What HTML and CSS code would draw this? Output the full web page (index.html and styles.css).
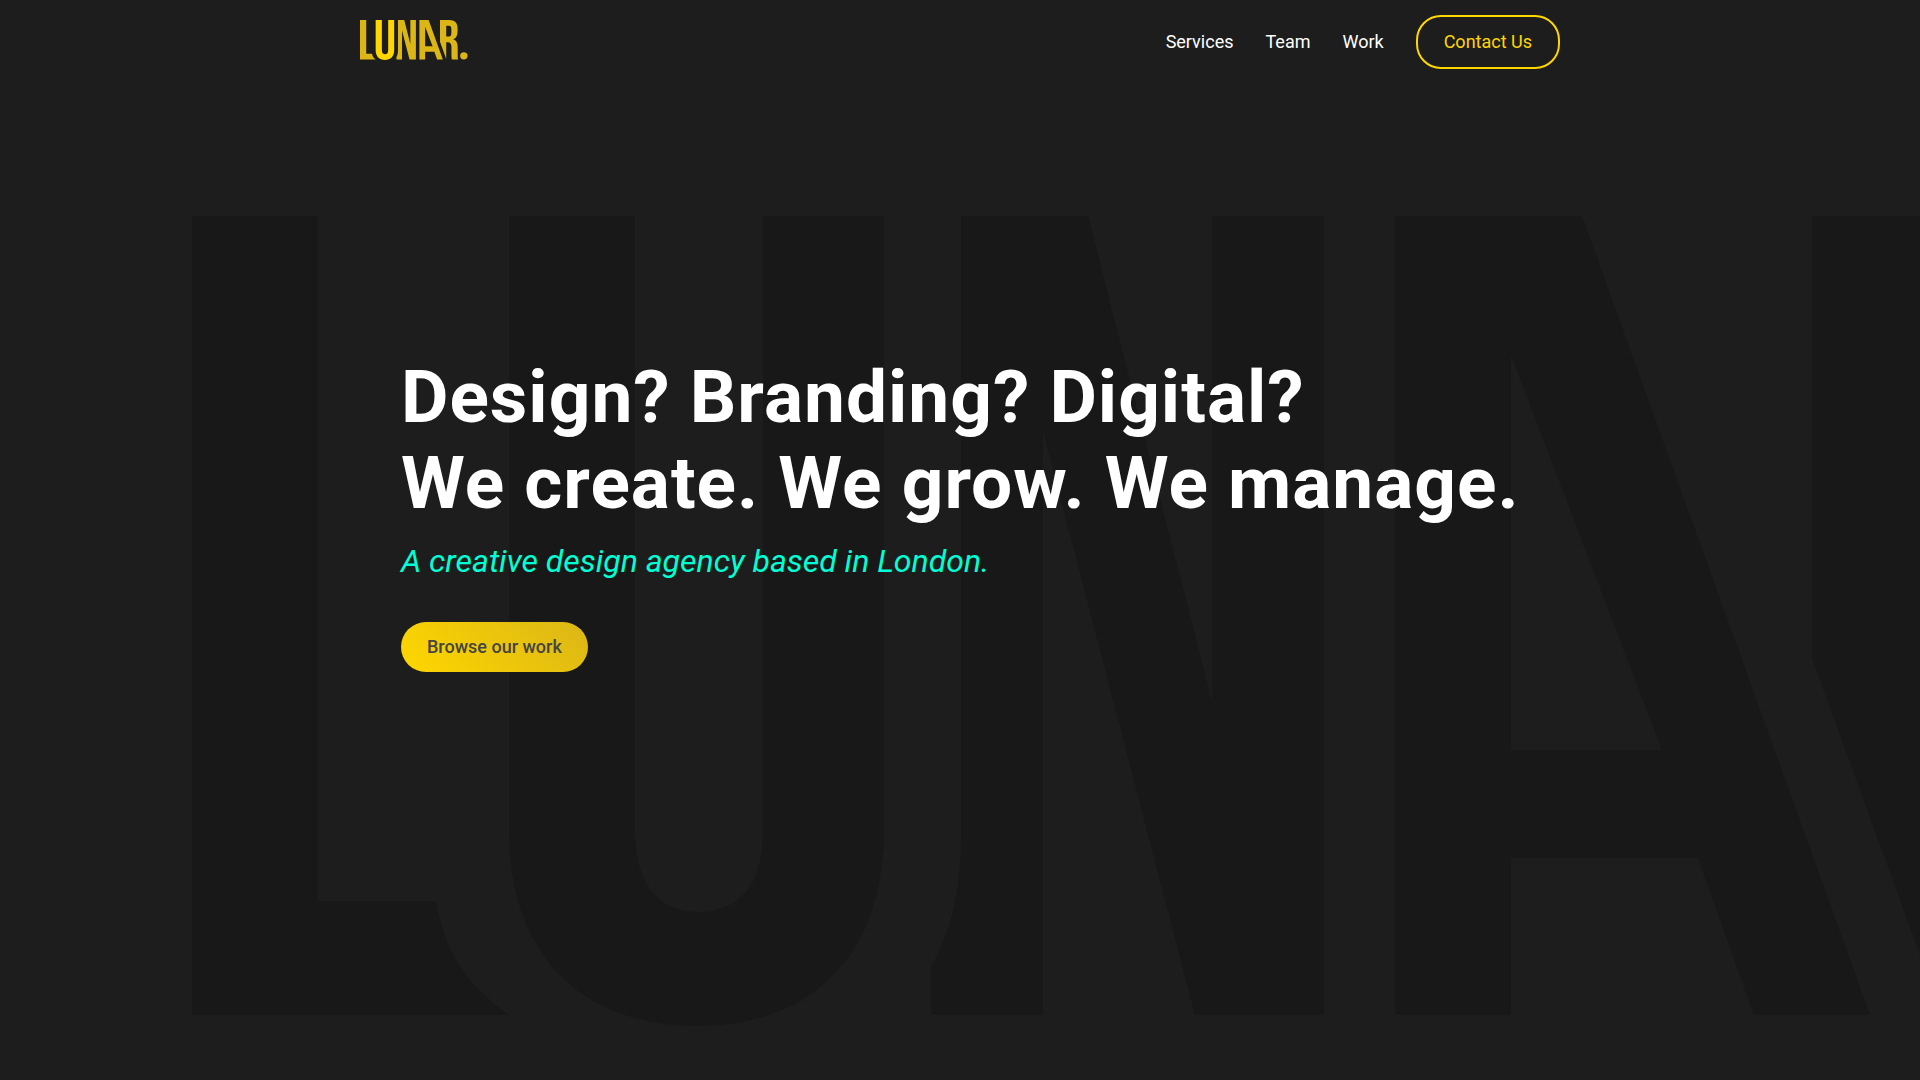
FILE: index.html
```html
<!DOCTYPE html>
<html lang="en">
<head>
<meta charset="utf-8">
<meta name="viewport" content="width=device-width, initial-scale=1">
<title>Lunar</title>
<link rel="stylesheet" href="styles.css">
</head>
<body>
<div class="page">
  <svg class="backdrop" viewBox="192 216 2178 810" aria-hidden="true">
    <defs>
      <g id="mark-base">
        <path d="M192 216H318V901H436C444 950 466 985 509 1015H192Z"/>
        <path d="M961 216H1088L1212 702V216H1324V1015H1195L1043 431V1015H931V967C952 930 961 888 961 835Z"/>
        <path fill-rule="evenodd" d="M1395 216H1582L1870 1015H1754L1698 858H1511V1015H1395ZM1511 355V750H1662Z"/>
        <path fill-rule="evenodd" d="M1812 216H1996C2112 216 2168 272 2168 384V444C2168 530 2140 584 2080 608C2144 628 2170 682 2170 770V926C2170 966 2170 990 2182 1015H2054C2046 990 2044 970 2044 926V768C2044 694 2022 666 1960 666H1938V1004L1812 658ZM1938 330V552H1984C2024 552 2042 530 2042 472V396C2042 350 2026 330 1992 330Z"/>
        <circle cx="2295" cy="942" r="75"/>
      </g>
      <path id="mark-accent" d="M509 216H635V830C635 884 658 912 699 912S763 884 763 830V216H884V830C884 955 812 1026 697 1026S509 955 509 830Z"/>
    </defs>
    <use href="#mark-base"/>
    <use href="#mark-accent"/>
  </svg>

  <header class="header">
    <a class="brand" href="#" aria-label="Lunar home">
      <svg class="logo" viewBox="192 216 2178 810" aria-hidden="true">
        <use class="logo-base" href="#mark-base"/>
        <use class="logo-accent" href="#mark-accent"/>
      </svg>
    </a>
    <nav class="nav" aria-label="Main">
      <a class="nav-link" href="#services">Services</a>
      <a class="nav-link" href="#team">Team</a>
      <a class="nav-link" href="#work">Work</a>
      <a class="button button-outline" href="#contact">Contact Us</a>
    </nav>
  </header>

  <main class="hero">
    <h1 class="title">Design? Branding? Digital?<br>We create. We grow. We manage.</h1>
    <p class="tagline">A creative design agency based in London.</p>
    <button class="button button-solid" type="button">Browse our work</button>
  </main>
</div>
</body>
</html>
```
FILE: styles.css
```css
* {
  box-sizing: border-box;
}

body {
  margin: 0;
  background: #1d1d1d;
  color: #fff;
  font-family: Roboto, "Liberation Sans", sans-serif;
  font-size: 18px;
  line-height: 22px;
}

.page {
  position: relative;
  min-height: 100vh;
  overflow: hidden;
}

/* Oversized brand mark running off the right edge, behind the content */
.backdrop {
  position: absolute;
  top: 20%;
  left: 10%;
  height: 75%;
  fill: #181818;
}

.header,
.hero {
  position: relative;
  max-width: 1200px;
  margin: 0 auto;
}

.header {
  display: flex;
  align-items: center;
  justify-content: space-between;
  padding: 15px 0;
}

.brand,
.logo {
  display: block;
}

.brand {
  padding-bottom: 4px;
}

.logo {
  height: 40px;
}

.logo-base {
  fill: #dbb616;
}

.logo-accent {
  fill: #ffd700;
}

.nav {
  display: flex;
  align-items: center;
  gap: 32px;
}

.nav-link {
  color: #fff;
  text-decoration: none;
}

.button {
  padding: 14px 26px;
  border-radius: 25px;
  font: inherit;
  text-decoration: none;
  cursor: pointer;
}

.button-outline {
  border: 2px solid #ffd700;
  color: #ffd700;
}

.button-solid {
  border: 0;
  background: linear-gradient(45deg, #ffd700, #dbb616);
  color: #444;
  font-weight: 500;
}

.hero {
  padding: 270px 0 40px 41px;
}

.title {
  margin: 0;
  font-size: 73px;
  line-height: 86px;
  letter-spacing: 1px;
}

.tagline {
  margin: 16px 0 42px;
  color: #00ffd5;
  font-size: 32px;
  font-style: italic;
  line-height: 38px;
}
```
